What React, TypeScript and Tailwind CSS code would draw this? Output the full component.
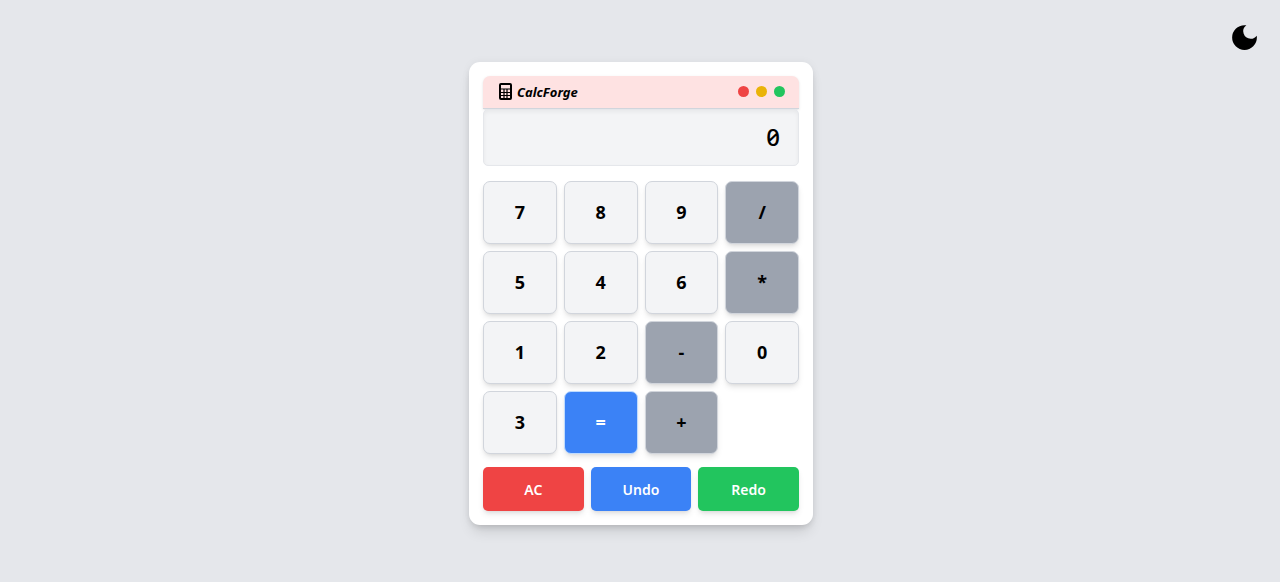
import { useState } from "react";

const keys = ["7", "8", "9", "/", "5", "4", "6", "*", "1", "2", "-", "0", "3", "=", "+"];

function keyStyle(key: string) {
  if (key === "=") return "border-blue-200 bg-[#3b82f6] text-white";
  if ("/*-+".includes(key)) return "border-gray-300 bg-[#9ca3af] text-black";
  return "border-gray-300 bg-[#f3f4f6] text-black";
}

function CalculatorIcon() {
  return (
    <svg viewBox="0 0 13 17" className="h-[17px] w-[13px]" aria-hidden="true">
      <rect x="1" y="1" width="11" height="15" rx="1" fill="none" stroke="black" strokeWidth="2" />
      <path d="M2 6h9M2 9.5h9M2 12.5h9M5 6v9M8 6v9" stroke="black" strokeWidth="1.2" />
    </svg>
  );
}

export default function App() {
  const [value, setValue] = useState("0");
  const append = (key: string) => {
    if (key !== "=") setValue((v) => (v === "0" ? key : v + key));
  };

  return (
    <main className="flex min-h-screen items-center justify-center bg-[#e5e7eb] py-4 font-['Noto_Sans',sans-serif] text-black">
      <button type="button" aria-label="Toggle dark mode" className="absolute top-[21px] right-[19px]">
        <svg viewBox="0 0 24 24" className="size-[33px]" fill="currentColor" aria-hidden="true">
          <path d="M12 3a9 9 0 1 0 9 9c0-.46-.04-.92-.1-1.36a5.389 5.389 0 0 1-4.4 2.26 5.403 5.403 0 0 1-3.14-9.8c-.44-.06-.9-.1-1.36-.1z" />
        </svg>
      </button>
      <section className="mt-1 ml-0.5 w-full max-w-[344px] rounded-[11px] bg-white p-3.5 shadow-[0_9px_14px_-3px_rgb(0_0_0/0.12),0_4px_6px_-2px_rgb(0_0_0/0.1),0_0_8px_rgb(0_0_0/0.05)]">
        <header className="flex h-[33px] items-center justify-between rounded-t-[7px] border-b border-gray-300 bg-[#fee2e2] pr-3.5 pl-4 shadow-sm">
          <div className="flex items-center gap-[5px]">
            <CalculatorIcon />
            <h1 className="pt-0.5 text-[13px] font-bold italic">CalcForge</h1>
          </div>
          <div className="flex gap-[7px]">
            <span className="size-[11px] rounded-full bg-[#ef4444]" />
            <span className="size-[11px] rounded-full bg-[#eab308]" />
            <span className="size-[11px] rounded-full bg-[#22c55e]" />
          </div>
        </header>
        <output className="flex h-[57px] items-center justify-end overflow-hidden rounded-[5px] border border-gray-200 bg-[#f3f4f6] px-[18px] text-2xl font-medium slashed-zero inset-shadow-sm">
          {value}
        </output>
        <div className="mt-[15px] grid grid-cols-4 gap-[7px]">
          {keys.map((key) => (
            <button
              key={key}
              type="button"
              onClick={() => append(key)}
              className={`h-[63px] rounded-[7px] border text-lg font-bold shadow-md ${keyStyle(key)}`}
            >
              {key}
            </button>
          ))}
        </div>
        <div className="mt-[13px] grid grid-cols-3 gap-[7px] text-sm font-semibold text-white">
          <button type="button" onClick={() => setValue("0")} className="h-11 rounded-[5px] bg-[#ef4444] pt-0.5 shadow-md">AC</button>
          <button type="button" className="h-11 rounded-[5px] bg-[#3b82f6] pt-0.5 shadow-md">Undo</button>
          <button type="button" className="h-11 rounded-[5px] bg-[#22c55e] pt-0.5 shadow-md">Redo</button>
        </div>
      </section>
    </main>
  );
}
